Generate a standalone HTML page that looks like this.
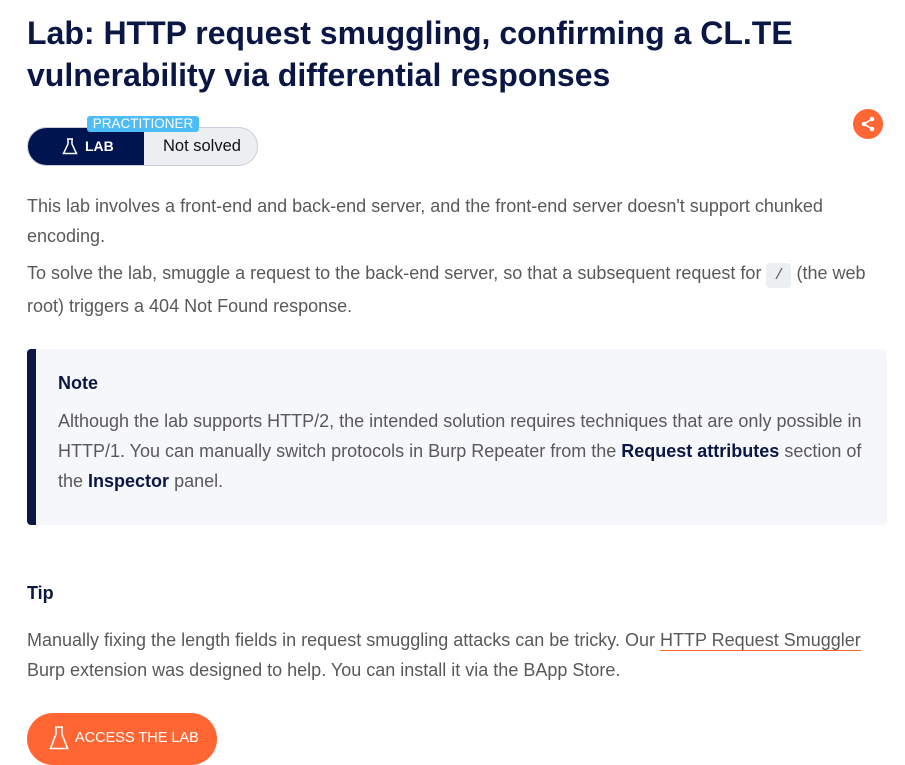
<!DOCTYPE html>
<html><head><style>
body{margin:0;background:#fff;font-family:"Liberation Sans",sans-serif;color:#595959;width:905px;height:761px;overflow:hidden;position:relative}
h1{position:absolute;left:27px;top:12px;margin:0;font-size:32px;line-height:42px;color:#0a1744;font-weight:bold;width:860px}
.p{position:absolute;left:27px;font-size:18px;line-height:30px;margin:0;width:850px}
.badge{position:absolute;left:27px;top:127px;width:231px;height:39px;border-radius:20px;overflow:hidden;border:1px solid #ccd;box-sizing:border-box;background:#ebeff2}
.badge .lab{position:absolute;left:0;top:0;width:116px;height:100%;background:#001450;color:#fff;font-weight:bold;font-size:14px;line-height:37px}
.badge .ns{position:absolute;left:135px;top:0;line-height:37px;font-size:16.5px;color:#111}
.prac{position:absolute;left:87px;top:116px;width:112px;height:16px;background:#4ebdf5;color:#fff;font-size:13.5px;line-height:16px;text-align:center;border-radius:3px}
.share{position:absolute;left:853px;top:109px;width:30px;height:30px;border-radius:50%;background:#ff6633}
.note{position:absolute;left:27px;top:349px;width:860px;height:176px;background:#f6f7fa;border-left:9px solid #0a1744;box-sizing:border-box;border-radius:4px}
b{color:#0a1744}
code{background:#ebeff2;border-radius:4px;padding:4px 8px;font-family:"Liberation Mono",monospace;font-size:15px}
.btn{position:absolute;left:27px;top:713px;width:190px;height:52px;border-radius:26px;background:#ff6633;color:#fff;font-size:14.5px;line-height:50px}
a{color:#595959;text-decoration:none;border-bottom:1px solid #ff6633}
</style></head><body>
<h1>Lab: HTTP request smuggling, confirming a CL.TE vulnerability via differential responses</h1>
<div class="badge"><div class="lab"><svg style="position:absolute;left:34px;top:10px" width="16" height="17" viewBox="0 0 16 17"><path d="M5 1h6M6 1v5L1.5 15.5h13L10 6V1" fill="none" stroke="#fff" stroke-width="1.5"/></svg><span style="position:absolute;left:57px">LAB</span></div><div class="ns">Not solved</div></div>
<div class="prac">PRACTITIONER</div>
<div class="share"><svg width="30" height="30" viewBox="0 0 30 30"><circle cx="19" cy="10" r="2.3" fill="#fff"/><circle cx="11" cy="15" r="2.3" fill="#fff"/><circle cx="19" cy="20" r="2.3" fill="#fff"/><path d="M19 10L11 15L19 20" stroke="#fff" stroke-width="1.6" fill="none"/></svg></div>
<p class="p" style="top:191px;width:810px">This lab involves a front-end and back-end server, and the front-end server doesn't support chunked encoding.</p>
<p class="p" style="top:258px">To solve the lab, smuggle a request to the back-end server, so that a subsequent request for <code>/</code> (the web root) triggers a 404 Not Found response.</p>
<div class="note">
<p class="p" style="left:22px;top:57px;width:815px">Although the lab supports HTTP/2, the intended solution requires techniques that are only possible in HTTP/1. You can manually switch protocols in Burp Repeater from the <b>Request attributes</b> section of the <b>Inspector</b> panel.</p>
<p class="p" style="left:22px;top:19px;font-weight:bold;color:#0a1744">Note</p>
</div>
<p class="p" style="top:578px;font-weight:bold;color:#0a1744">Tip</p>
<p class="p" style="top:625px">Manually fixing the length fields in request smuggling attacks can be tricky. Our <a>HTTP Request Smuggler</a> Burp extension was designed to help. You can install it via the BApp Store.</p>
<div class="btn"><svg style="position:absolute;left:22px;top:13px" width="20" height="24" viewBox="0 0 20 24"><path d="M6 1h8M7 1v7L1.5 22.5h17L13 8V1" fill="none" stroke="#fff" stroke-width="1.6"/></svg><span style="position:absolute;left:48px">ACCESS THE LAB</span></div>
</body></html>
